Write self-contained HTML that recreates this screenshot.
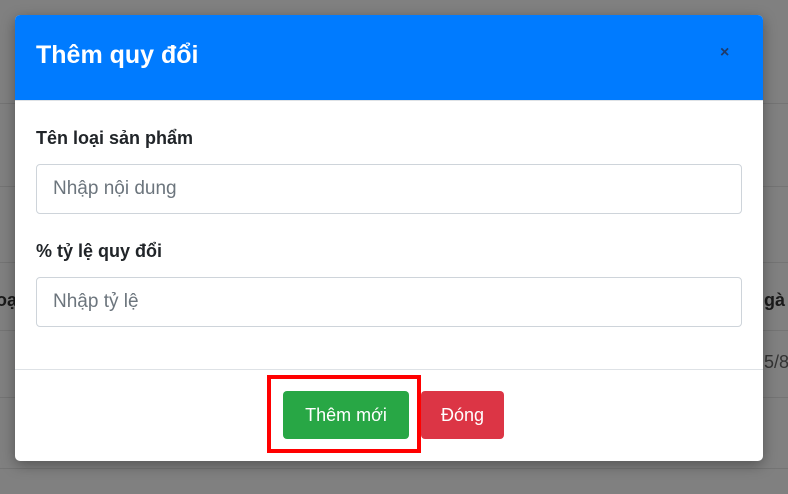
<!DOCTYPE html>
<html><head><meta charset="utf-8"><style>
body{margin:0;width:788px;height:494px;background:#808080;position:relative;overflow:hidden;font-family:"Segoe UI","Liberation Sans","DejaVu Sans",sans-serif;}
.bgl{position:absolute;left:0;right:0;height:1px;background:#747474}
.bgt{position:absolute;color:#1a1a1a;font-size:18px;font-weight:bold}
.modal{position:absolute;left:15px;top:15px;width:748px;height:446px;background:#fff;border-radius:5px;overflow:hidden;box-shadow:0 4px 14px rgba(0,0,0,.35)}
.hd{height:85px;background:#007bff;position:relative;border-bottom:1px solid #dee2e6}
.hd h5{margin:0;position:absolute;left:21px;top:26px;color:#fff;font-size:25px;font-weight:600}
.x{position:absolute;left:705px;top:29px;color:#1f3b6b;font-size:16px;font-weight:bold}
.lbl{position:absolute;left:21px;font-size:18px;font-weight:bold;color:#212529}
.inp{position:absolute;left:21px;width:706px;height:50px;border:1px solid #ced4da;border-radius:4px;box-sizing:border-box;color:#6c757d;font-size:19px;line-height:48px;padding-left:16px}
.div{position:absolute;left:0;right:0;top:354px;height:1px;background:#dee2e6}
.btn{position:absolute;top:376px;height:48px;border-radius:4px;color:#fff;font-size:18px;line-height:48px;text-align:center}
.box{position:absolute;left:267px;top:375px;width:146px;height:70px;border:4px solid #ff0000}
</style></head><body>
<div class="bgl" style="top:103px"></div>
<div class="bgl" style="top:186px"></div>
<div class="bgl" style="top:262px"></div>
<div class="bgl" style="top:330px"></div>
<div class="bgl" style="top:397px"></div>
<div class="bgl" style="top:468px"></div>
<div class="bgt" style="left:-4px;top:290px">oạ</div>
<div class="bgt" style="left:764px;top:290px">gà</div>
<div class="bgt" style="left:764px;top:352px;font-weight:normal;color:#333">5/8</div>
<div class="modal">
<div class="hd"><h5>Thêm quy đổi</h5><div class="x">×</div></div>
<div class="lbl" style="top:113px">Tên loại sản phẩm</div>
<div class="inp" style="top:149px">Nhập nội dung</div>
<div class="lbl" style="top:226px">% tỷ lệ quy đổi</div>
<div class="inp" style="top:262px">Nhập tỷ lệ</div>
<div class="div"></div>
<div class="btn" style="left:268px;width:126px;background:#28a745">Thêm mới</div>
<div class="btn" style="left:406px;width:83px;background:#dc3545">Đóng</div>
</div>
<div class="box"></div>
</body></html>
